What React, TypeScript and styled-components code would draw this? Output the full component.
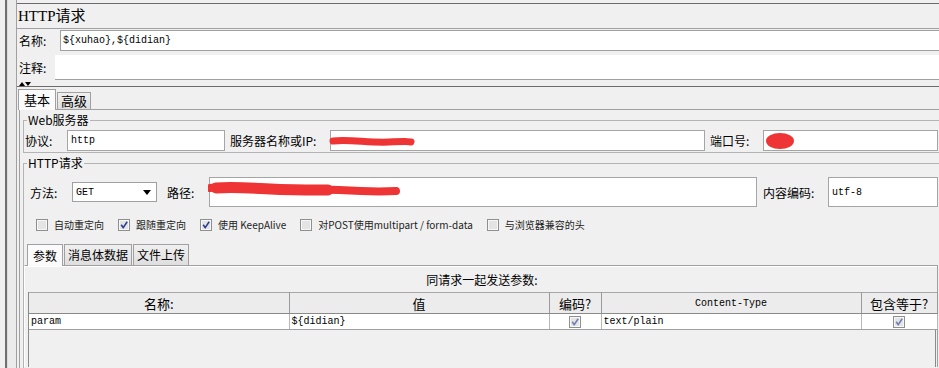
import styled, { createGlobalStyle } from 'styled-components';

const GlobalStyle = createGlobalStyle`
  html, body {
    margin: 0;
    padding: 0;
    background: #f0f0f0;
  }
  body {
    font-family: 'Noto Sans CJK SC', 'Liberation Sans', sans-serif;
    font-size: 12px;
    color: #000;
  }
`;

type Option = { label: string; checked: boolean };

const options: Option[] = [
  { label: '自动重定向', checked: false },
  { label: '跟随重定向', checked: true },
  { label: '使用 KeepAlive', checked: true },
  { label: '对POST使用multipart / form-data', checked: false },
  { label: '与浏览器兼容的头', checked: false },
];

const columns = [
  { title: '名称:', width: 260 },
  { title: '值', width: 260 },
  { title: '编码?', width: 52 },
  { title: 'Content-Type', width: 260, mono: true },
  { title: '包含等于?', width: 76 },
];

const CheckBox = ({ checked, faded }: { checked: boolean; faded?: boolean }) => (
  <svg width="12" height="12" viewBox="0 0 12 12">
    <rect x="0.5" y="0.5" width="11" height="11" fill="#e4e4e4" stroke="#8e8f8f" />
    <rect x="1.5" y="1.5" width="9" height="9" fill="none" stroke="#f7f7f7" />
    {checked && (
      <path
        d="M3.2 5.8 L5.2 8.6 L9.2 2.8"
        stroke={faded ? '#6f80b0' : '#2d3f8e'}
        strokeWidth="1.6"
        fill="none"
      />
    )}
  </svg>
);

const App = () => {
  return (
    <Window>
      <GlobalStyle />
      <Rail />
      <Main>
        <Title>HTTP请求</Title>
        <NameRow>
          <RowLabel $w={43}>名称:</RowLabel>
          <NameInput>{'${xuhao},${didian}'}</NameInput>
        </NameRow>
        <CommentRow>
          <RowLabel $w={38}>注释:</RowLabel>
          <CommentArea />
        </CommentRow>
        <Divider>
          <svg width="12" height="5" viewBox="0 0 12 5">
            <path d="M0 5 L3 1 L6 5 Z" fill="#000" />
            <path d="M6 1 L12 1 L9 5 Z" fill="#000" />
          </svg>
        </Divider>
        <TabBar $pad={1} $h={22}>
          <Tab $active $h={21}>基本</Tab>
          <Tab $h={17}>高级</Tab>
        </TabBar>
        <OuterPanel>
          <Group>
            <Legend>Web服务器</Legend>
            <FieldLine $h={21}>
              <FieldLabel $w={43} $pl={1}>协议:</FieldLabel>
              <TextField $w={158} $h={21}>http</TextField>
              <FieldLabel $w={105} $pl={5}>服务器名称或IP:</FieldLabel>
              <TextField $w={375} $h={21}>
                <Scribble width="90" height="21" viewBox="0 0 90 21">
                  <path
                    d="M4 10 C 20 8, 40 12, 60 11 S 78 10, 82 11"
                    stroke="#ee3434"
                    strokeWidth="7"
                    strokeLinecap="round"
                    fill="none"
                  />
                </Scribble>
              </TextField>
              <FieldLabel $w={58} $pl={5}>端口号:</FieldLabel>
              <TextField $h={21}>
                <Scribble width="40" height="21" viewBox="0 0 40 21">
                  <ellipse cx="18" cy="10" rx="14" ry="8" fill="#ee3434" />
                </Scribble>
              </TextField>
            </FieldLine>
          </Group>
          <Group $grow>
            <Legend>HTTP请求</Legend>
            <FieldLine $h={30} $top={4}>
              <FieldLabel $w={48} $pl={6}>方法:</FieldLabel>
              <Select>
                GET
                <svg width="8" height="5" viewBox="0 0 8 5">
                  <path d="M0 0 L8 0 L4 5 Z" fill="#000" />
                </svg>
              </Select>
              <FieldLabel $w={52} $pl={10}>路径:</FieldLabel>
              <TextField $w={548} $h={30}>
                <Scribble width="200" height="30" viewBox="0 0 200 30">
                  <path
                    d="M2 10 C 30 6, 60 12, 90 11 S 150 15, 188 13"
                    stroke="#ee3434"
                    strokeWidth="8"
                    strokeLinecap="round"
                    fill="none"
                  />
                  <path
                    d="M8 10 C 40 8, 70 13, 120 12"
                    stroke="#ee3434"
                    strokeWidth="11"
                    strokeLinecap="round"
                    fill="none"
                  />
                </Scribble>
              </TextField>
              <FieldLabel $w={71} $pl={6}>内容编码:</FieldLabel>
              <TextField $h={30}>utf-8</TextField>
            </FieldLine>
            <OptionRow>
              {options.map(o => (
                <OptionItem key={o.label}>
                  <CheckBox checked={o.checked} />
                  {o.label}
                </OptionItem>
              ))}
            </OptionRow>
            <TabBar $pad={3} $h={24} $top={9}>
              <Tab $active $h={22} $small>参数</Tab>
              <Tab $h={21} $small>消息体数据</Tab>
              <Tab $h={21} $small>文件上传</Tab>
            </TabBar>
            <ParamPanel>
              <Caption>同请求一起发送参数:</Caption>
              <ScrollPane>
                <Table>
                  <colgroup>
                    {columns.map(c => (
                      <col key={c.title} style={{ width: c.width }} />
                    ))}
                  </colgroup>
                  <thead>
                    <tr>
                      {columns.map(c => (
                        <HeadCell key={c.title} $mono={c.mono}>
                          {c.title}
                        </HeadCell>
                      ))}
                    </tr>
                  </thead>
                  <tbody>
                    <tr>
                      <Cell>param</Cell>
                      <Cell>{'${didian}'}</Cell>
                      <Cell $center>
                        <CheckBox checked faded />
                      </Cell>
                      <Cell>text/plain</Cell>
                      <Cell $center>
                        <CheckBox checked faded />
                      </Cell>
                    </tr>
                  </tbody>
                </Table>
              </ScrollPane>
            </ParamPanel>
          </Group>
        </OuterPanel>
      </Main>
    </Window>
  );
};

const Window = styled.div`
  width: 939px;
  height: 368px;
  overflow: hidden;
  display: flex;
  background: #f0f0f0;
`;

const Rail = styled.div`
  width: 16px;
  flex-shrink: 0;
  background: linear-gradient(
    to right,
    #f0f0f0 0 5px,
    #707070 5px 7px,
    #dcdcdc 7px 8px,
    #ebebeb 8px 16px
  );
`;

const Main = styled.div`
  flex: 1;
  min-width: 0;
  display: flex;
  flex-direction: column;
  border-left: 1px solid #a0a0a0;
  padding-top: 3px;
`;

const Title = styled.div`
  border-top: 1px solid #6b6b6b;
  height: 24px;
  line-height: 24px;
  padding-left: 1px;
  font-family: 'Liberation Serif', 'Noto Sans CJK SC', serif;
  font-size: 15px;
`;

const NameRow = styled.div`
  display: flex;
  align-items: center;
  border-top: 1px solid #a0a0a0;
  padding-top: 1px;
`;

const RowLabel = styled.div<{ $w: number }>`
  width: ${({ $w }) => $w}px;
  flex-shrink: 0;
  box-sizing: border-box;
  padding-left: 2px;
  font-size: 12px;
`;

const NameInput = styled.div`
  flex: 1;
  height: 21px;
  box-sizing: border-box;
  border: 1px solid #a0a0a0;
  border-right: none;
  background: #fff;
  padding-left: 2px;
  font-family: 'Liberation Mono', monospace;
  font-size: 10px;
  line-height: 19px;
`;

const CommentRow = styled.div`
  display: flex;
  align-items: center;
  padding-top: 4px;
`;

const CommentArea = styled.div`
  flex: 1;
  height: 25px;
  box-sizing: border-box;
  background: #fff;
  border-bottom: 1px solid #a0a0a0;
`;

const Divider = styled.div`
  height: 7px;
  box-sizing: border-box;
  padding: 1px 0 0 2px;
  border-bottom: 1px solid #6b6b6b;
  line-height: 0;
`;

const TabBar = styled.div<{ $pad: number; $h: number; $top?: number }>`
  display: flex;
  align-items: flex-end;
  height: ${({ $h }) => $h}px;
  padding-left: ${({ $pad }) => $pad}px;
  margin-top: ${({ $top }) => $top || 0}px;
  flex-shrink: 0;
`;

const Tab = styled.div<{ $active?: boolean; $h: number; $small?: boolean }>`
  position: relative;
  z-index: ${({ $active }) => ($active ? 1 : 0)};
  height: ${({ $h }) => $h}px;
  box-sizing: border-box;
  padding: 0 ${({ $active }) => ($active ? 5 : 3)}px;
  margin-bottom: ${({ $active }) => ($active ? -1 : 0)}px;
  margin-right: 1px;
  border: 1px solid #a0a0a0;
  border-bottom: none;
  background: ${({ $active }) =>
    $active ? '#fbfbfb' : 'linear-gradient(#f0f0f0, #dedede)'};
  font-size: ${({ $small }) => ($small ? 12 : 13)}px;
  line-height: ${({ $h }) => $h - 1}px;
  white-space: nowrap;
`;

const OuterPanel = styled.div`
  flex: 1;
  min-height: 0;
  display: flex;
  flex-direction: column;
  margin-left: 2px;
  padding-left: 3px;
  border-top: 1px solid #a0a0a0;
  border-left: 1px solid #a0a0a0;
`;

const Group = styled.fieldset<{ $grow?: boolean }>`
  margin: 3px 0 0;
  padding: 3px 0 1px;
  min-width: 0;
  border: 1px solid #b4b4b4;
  border-right: none;
  ${({ $grow }) => ($grow ? 'border-bottom: none;' : '')}
  flex: ${({ $grow }) => ($grow ? 1 : 'none')};
  display: flex;
  flex-direction: column;
  min-height: 0;
`;

const Legend = styled.legend`
  padding: 0 1px;
  margin-left: 3px;
  font-size: 12px;
  line-height: 14px;
  height: 14px;
`;

const FieldLine = styled.div<{ $h: number; $top?: number }>`
  display: flex;
  align-items: center;
  height: ${({ $h }) => $h}px;
  margin-top: ${({ $top }) => $top || 0}px;
  padding-right: 1px;
  flex-shrink: 0;
`;

const FieldLabel = styled.div<{ $w: number; $pl: number }>`
  width: ${({ $w }) => $w}px;
  padding-left: ${({ $pl }) => $pl}px;
  box-sizing: border-box;
  flex-shrink: 0;
  font-size: 12px;
  white-space: nowrap;
`;

const TextField = styled.div<{ $w?: number; $h: number }>`
  position: relative;
  flex: ${({ $w }) => ($w ? `0 0 ${$w}px` : '1')};
  min-width: 0;
  height: ${({ $h }) => $h}px;
  box-sizing: border-box;
  border: 1px solid #a5a5a5;
  background: #fff;
  padding-left: 3px;
  display: flex;
  align-items: center;
  font-family: 'Liberation Mono', monospace;
  font-size: 10px;
`;

const Scribble = styled.svg`
  position: absolute;
  left: -2px;
  top: 0;
`;

const Select = styled.div`
  flex: 0 0 85px;
  height: 20px;
  box-sizing: border-box;
  border: 1px solid #a0a0a0;
  background: #fff;
  display: flex;
  align-items: center;
  justify-content: space-between;
  padding: 0 5px 0 3px;
  font-family: 'Liberation Mono', monospace;
  font-size: 10px;
`;

const OptionRow = styled.div`
  display: flex;
  align-items: center;
  gap: 14px;
  height: 15px;
  margin-top: 10px;
  padding-left: 12px;
  flex-shrink: 0;
`;

const OptionItem = styled.div`
  display: flex;
  align-items: center;
  gap: 6px;
  font-size: 10px;
  color: #222;
  white-space: nowrap;
`;

const ParamPanel = styled.div`
  flex: 1;
  min-height: 0;
  display: flex;
  flex-direction: column;
  margin-right: 1px;
  padding: 0 1px 0 3px;
  border-top: 1px solid #a0a0a0;
  border-left: 1px solid #fff;
  border-right: 1px solid #a0a0a0;
  box-shadow: inset 0 1px 0 #fff;
`;

const Caption = styled.div`
  margin-top: 4px;
  height: 20px;
  line-height: 20px;
  text-align: center;
  font-size: 12px;
`;

const ScrollPane = styled.div`
  flex: 1;
  margin-top: 2px;
  border-left: 1px solid #8a8a8a;
  border-right: 1px solid #8a8a8a;
`;

const Table = styled.table`
  width: 100%;
  table-layout: fixed;
  border-collapse: collapse;
`;

const HeadCell = styled.th<{ $mono?: boolean }>`
  height: 20px;
  padding: 0;
  background: #ececec;
  border-top: 1px solid #a8a8a8;
  border-right: 1px solid #9a9a9a;
  border-bottom: 1px solid #8a8a8a;
  font-weight: normal;
  text-align: center;
  font-family: ${({ $mono }) =>
    $mono ? "'Liberation Mono', monospace" : "'Noto Sans CJK SC', sans-serif"};
  font-size: ${({ $mono }) => ($mono ? 10 : 13)}px;
`;

const Cell = styled.td<{ $center?: boolean }>`
  height: 15px;
  padding: 0 2px;
  background: #fff;
  border-right: 1px solid #b8b8b8;
  border-bottom: 1px solid #a0a0a0;
  text-align: ${({ $center }) => ($center ? 'center' : 'left')};
  font-family: 'Liberation Mono', monospace;
  font-size: 10px;
  line-height: 0;
  svg {
    vertical-align: middle;
  }
  &:not(:has(svg)) {
    line-height: 15px;
  }
`;

export default App;
